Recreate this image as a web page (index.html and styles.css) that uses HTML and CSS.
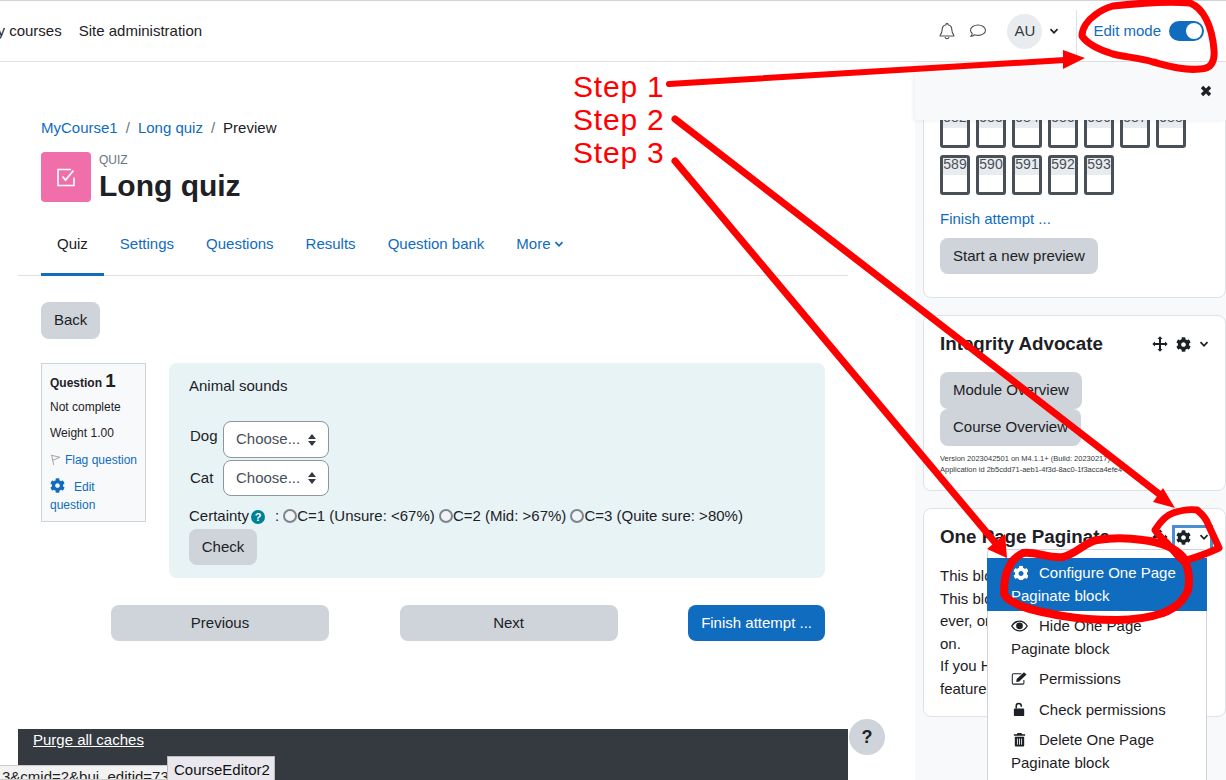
FILE: index.html
```html
<!DOCTYPE html>
<html lang="en">
<head>
  <meta charset="UTF-8">
  <title>Long quiz: Preview</title>
  <link rel="stylesheet" href="styles.css">
</head>
<body>
  <svg class="defs" width="0" height="0">
    <symbol id="cog" viewBox="0 0 512 512"><path d="M487.4 315.7l-42.6-24.6c4.3-23.2 4.3-47 0-70.2l42.6-24.6c4.9-2.8 7.1-8.6 5.5-14-11.1-35.6-30-67.8-54.7-94.6-3.8-4.1-10-5.1-14.8-2.3L380.8 110c-17.9-15.4-38.5-27.3-60.8-35.1V25.8c0-5.6-3.9-10.5-9.4-11.7-36.7-8.2-74.3-7.8-109.2 0-5.5 1.2-9.4 6.1-9.4 11.7V75c-22.2 7.9-42.8 19.8-60.8 35.1L88.7 85.5c-4.9-2.8-11-1.9-14.8 2.3-24.7 26.7-43.6 58.9-54.7 94.6-1.7 5.4.6 11.2 5.5 14L67.3 221c-4.3 23.2-4.3 47 0 70.2l-42.6 24.6c-4.9 2.8-7.1 8.6-5.5 14 11.1 35.6 30 67.8 54.7 94.6 3.8 4.1 10 5.1 14.8 2.3l42.6-24.6c17.9 15.4 38.5 27.3 60.8 35.1v49.2c0 5.6 3.9 10.5 9.4 11.7 36.7 8.2 74.3 7.8 109.2 0 5.5-1.2 9.4-6.1 9.4-11.7v-49.2c22.2-7.9 42.8-19.8 60.8-35.1l42.6 24.6c4.9 2.8 11 1.9 14.8-2.3 24.7-26.7 43.6-58.9 54.7-94.6 1.5-5.5-.7-11.3-5.6-14.1zM256 336c-44.1 0-80-35.9-80-80s35.9-80 80-80 80 35.9 80 80-35.9 80-80 80z" fill="currentColor"/></symbol>
    <symbol id="chev" viewBox="0 0 10 10"><path d="M1.5 3.2 5 6.8l3.5-3.6" fill="none" stroke="currentColor" stroke-width="1.7"/></symbol>
    <symbol id="move" viewBox="0 0 16 16"><path d="M8 .3 10.6 3H9v4h4V5.4L15.7 8 13 10.6V9H9v4h1.6L8 15.7 5.4 13H7V9H3v1.6L.3 8 3 5.4V7h4V3H5.4z" fill="currentColor"/></symbol>
  </svg>

  <nav class="topbar">
    <a class="nav-link my-courses">My courses</a>
    <a class="nav-link">Site administration</a>
    <div class="topbar-right">
      <svg class="nav-icon" viewBox="0 0 16 18" width="16" height="18"><path d="M8 1.2c.6 0 1 .4 1 1v.6c2.400.5 3.800 2.400 3.800 4.800 0 3.300 1 4.500 2 5.600v.8H1.200v-.8c1-1.100 2-2.300 2-5.600 0-2.400 1.400-4.300 3.800-4.800v-.6c0-.6.400-1 1-1zM6 15.200c.2 1 1 1.600 2 1.600s1.800-.6 2-1.600" fill="none" stroke="#495057" stroke-width="1.100"/></svg>
      <svg class="nav-icon comment" viewBox="0 0 18 16" width="18" height="16"><path d="M9 2C4.900 2 1.500 4.300 1.500 7.200c0 1.300.7 2.400 1.800 3.300-.2 1-.8 2-1.500 2.800 1.500-.1 2.800-.7 3.800-1.500 1.100.4 2.200.6 3.400.6 4.100 0 7.500-2.300 7.500-5.200S13.100 2 9 2z" fill="none" stroke="#495057" stroke-width="1.100"/></svg>
      <span class="avatar">AU</span>
      <svg class="nav-chev" width="10" height="10"><use href="#chev"/></svg>
      <div class="edit-switch">
        <span class="edit-label">Edit mode</span>
        <span class="toggle"><span class="knob"></span></span>
      </div>
    </div>
  </nav>

  <div class="page">
    <main class="main">
      <div class="content">
        <div class="breadcrumb">
          <a>MyCourse1</a><span class="sep">/</span><a>Long quiz</a><span class="sep">/</span><span>Preview</span>
        </div>
        <header class="page-head">
          <span class="quiz-icon">
            <svg viewBox="0 0 24 24" width="24" height="24"><path d="M20 12.500V20.500H4V4.500H17" fill="none" stroke="#fff" stroke-width="1.600"/><path d="M8.500 11.500 11.500 15 19.500 5.500" fill="none" stroke="#fff" stroke-width="1.800"/></svg>
          </span>
          <div>
            <div class="mod-type">QUIZ</div>
            <h1>Long quiz</h1>
          </div>
        </header>
        <ul class="tabs">
          <li class="active">Quiz</li>
          <li>Settings</li>
          <li>Questions</li>
          <li>Results</li>
          <li>Question bank</li>
          <li>More <svg class="tab-chev" width="10" height="10"><use href="#chev"/></svg></li>
        </ul>

        <button class="btn back">Back</button>

        <section class="question">
          <div class="q-info">
            <h3>Question <span class="qno">1</span></h3>
            <div class="q-state">Not complete</div>
            <div class="q-grade">Weight 1.00</div>
            <div class="q-flag">
              <svg viewBox="0 0 14 16" width="12" height="14"><path d="M2 1.500 4.800 14.500M2 2 12.500 4.500 6 7.500 3.200 8" fill="none" stroke="#868e96" stroke-width="1"/></svg>
              <a>Flag question</a>
            </div>
            <div class="q-edit">
              <svg width="15" height="15"><use href="#cog"/></svg><a class="edit-word">Edit</a><br><a>question</a>
            </div>
          </div>

          <div class="q-body">
            <p class="q-text">Animal sounds</p>
            <div class="match-row">
              <span class="match-label">Dog</span>
              <span class="fake-select tall">Choose...<span class="carets"></span></span>
            </div>
            <div class="match-row">
              <span class="match-label">Cat</span>
              <span class="fake-select">Choose...<span class="carets"></span></span>
            </div>
            <div class="certainty">
              Certainty<span class="help">?</span><span class="colon">:</span><input type="radio" name="c">C=1 (Unsure: &lt;67%) <input type="radio" name="c">C=2 (Mid: &gt;67%) <input type="radio" name="c">C=3 (Quite sure: &gt;80%)
            </div>
            <button class="btn check">Check</button>
          </div>
        </section>

        <div class="quiz-nav">
          <button class="btn wide">Previous</button>
          <button class="btn wide">Next</button>
          <button class="btn primary">Finish attempt ...</button>
        </div>

        <footer class="footer">
          <a class="purge">Purge all caches</a>
          <a class="footer-more">Switch role</a>
        </footer>
      </div>
      <button class="help-float">?</button>
    </main>

    <aside class="drawer">
      <div class="card nav-card">
        <div class="qn-row">
          <span class="qn"><i>582</i></span><span class="qn"><i>583</i></span><span class="qn"><i>584</i></span><span class="qn"><i>585</i></span><span class="qn"><i>586</i></span><span class="qn"><i>587</i></span><span class="qn"><i>588</i></span>
        </div>
        <div class="qn-row">
          <span class="qn"><i>589</i></span><span class="qn"><i>590</i></span><span class="qn"><i>591</i></span><span class="qn"><i>592</i></span><span class="qn"><i>593</i></span>
        </div>
        <a class="finish-link">Finish attempt ...</a>
        <button class="btn">Start a new preview</button>
      </div>

      <div class="card ia-card">
        <div class="card-head">
          <h5>Integrity Advocate</h5>
          <svg class="ic-move" width="16" height="16"><use href="#move"/></svg>
          <svg class="ic-cog" width="15" height="15"><use href="#cog"/></svg>
          <svg class="ic-chev" width="10" height="10"><use href="#chev"/></svg>
        </div>
        <div class="stack">
          <button class="btn">Module Overview</button>
          <button class="btn">Course Overview</button>
        </div>
        <div class="tiny">Version 2023042501 on M4.1.1+ (Build: 20230217)<br>Application id 2b5cdd71-aeb1-4f3d-8ac0-1f3acca4efe4</div>
      </div>

      <div class="card opp-card">
        <div class="card-head">
          <h5>One Page Paginate</h5>
          <svg class="ic-move" width="16" height="16"><use href="#move"/></svg>
          <span class="menu-focus">
            <svg class="ic-cog" width="15" height="15"><use href="#cog"/></svg>
            <svg class="ic-chev" width="10" height="10"><use href="#chev"/></svg>
          </span>
        </div>
        <p class="opp-text">This block lets you<br>This block works<br>ever, only<br>on.<br>If you Have<br>features</p>
      </div>

      <div class="drawer-head">
        <svg viewBox="0 0 12 12" width="12" height="12"><path d="M2 2 10 10M10 2 2 10" stroke="#1d2125" stroke-width="3.400"/></svg>
      </div>

      <ul class="menu">
        <li class="on"><svg class="mi" width="16" height="16" viewBox="-60 -60 632 632"><use href="#cog"/></svg>Configure One Page Paginate block</li>
        <li><svg class="mi" viewBox="0 0 18 14" width="17" height="14"><path d="M.8 7C3 3.500 5.800 1.800 9 1.800S15 3.500 17.200 7C15 10.500 12.200 12.200 9 12.200S3 10.500 .8 7z" fill="none" stroke="#1d2125" stroke-width="1.400"/><circle cx="9" cy="6.800" r="3.600" fill="#1d2125"/></svg>Hide One Page Paginate block</li>
        <li><svg class="mi" viewBox="0 0 18 16" width="17" height="15"><path d="M11 3H2.500A1.200 1.200 0 0 0 1.300 4.200v8.600A1.200 1.200 0 0 0 2.500 14h10a1.200 1.200 0 0 0 1.200-1.200V9.500" fill="none" stroke="#1d2125" stroke-width="1.100"/><path d="M6 8.500 13.800 1.200l2.700 2.400-7.800 7.500-3.200.7z" fill="#1d2125"/></svg>Permissions</li>
        <li><svg class="mi" viewBox="0 0 14 16" width="13" height="15"><path d="M3.500 7V4.200a2.700 2.700 0 0 1 5.400 0V5" fill="none" stroke="#1d2125" stroke-width="1.600"/><rect x="1" y="7" width="11" height="8" rx="1" fill="#1d2125"/></svg>Check permissions</li>
        <li><svg class="mi" viewBox="0 0 14 16" width="13" height="15"><path d="M5 1h4l1 1.500h3V4H1V2.500h3zM2 5h10v9.500a1 1 0 0 1-1 1H3a1 1 0 0 1-1-1z" fill="#1d2125"/><path d="M4.800 7v6.500M7 7v6.500M9.200 7v6.500" stroke="#fff" stroke-width=".9"/></svg>Delete One Page Paginate block</li>
      </ul>
    </aside>
  </div>

  <!-- annotations drawn on top of the screenshot -->
  <svg class="marks" width="1226" height="780" viewBox="0 0 1226 780">
    <g fill="none" stroke="#f00" stroke-linecap="round" stroke-linejoin="round">
      <path d="M669 84 1065 60" stroke-width="6"/>
      <path d="M675 119 1163 497" stroke-width="7"/>
      <path d="M675 161 998 546" stroke-width="7"/>
      <path d="M1113 6C1140 3 1170 1 1190 3 1203 8 1212 25 1214 50 1215 62 1211 69 1200 69 1183 71 1165 65 1153 62 1140 58 1125 57 1113 54 1100 50 1088 45 1082 36 1082 28 1088 20 1095 15 1100 11 1106 8 1113 6z" stroke-width="7"/>
      <path d="M1155 530C1160 522 1167 515 1173 513 1182 510 1190 509 1197 510 1202 514 1206 518 1208 524 1212 533 1216 541 1219 548 1208 553 1195 558 1183 561 1177 556 1172 549 1167 543 1163 539 1158 535 1155 530z" stroke-width="7"/>
      <path d="M1023 553C1035 551 1050 559 1063 557 1078 553 1085 542 1097 540 1115 537 1130 538 1143 540 1160 542 1175 548 1183 557 1189 568 1190 580 1188 590 1183 602 1175 608 1163 613 1148 618 1132 620 1117 620 1098 620 1080 619 1063 616 1045 613 1030 610 1019 605 1010 601 1005 598 1004 593 1004 583 1005 574 1009 567 1012 560 1017 556 1023 553z" stroke-width="8"/>
    </g>
    <path d="M1085 58 1063 50 1063 69z" fill="#f00"/>
    <path d="M1175 508 1163 488 1153 502z" fill="#f00"/>
    <path d="M1007 558 1005 534 987 549z" fill="#f00"/>
  </svg>
  <div class="steps">
    <div>Step 1</div>
    <div>Step 2</div>
    <div>Step 3</div>
  </div>

  <div class="url-tip">3&amp;cmid=2&amp;bui_editid=73</div>
  <div class="name-tip">CourseEditor2</div>
</body>
</html>
```

FILE: styles.css
```css
html, body {
  margin: 0;
  padding: 0;
}
body {
  position: relative;
  width: 1226px;
  height: 780px;
  overflow: hidden;
  font-family: "Liberation Sans", Arial, sans-serif;
  font-size: 15px;
  line-height: 22.5px;
  color: #1d2125;
  background: #fff;
}
a {
  color: #0f6cbf;
}
.defs {
  position: absolute;
}

/* top bar */
.topbar {
  display: flex;
  align-items: center;
  box-sizing: border-box;
  height: 62px;
  border-top: 1px solid #ced4da;
  border-bottom: 1px solid #dee2e6;
}
.nav-link {
  color: #1d2125;
}
.my-courses {
  margin-left: -15px;
  margin-right: 17px;
}
.topbar-right {
  display: flex;
  align-items: center;
  margin-left: auto;
  height: 100%;
}
.nav-icon {
  margin-right: 14px;
}
.nav-icon.comment {
  margin-right: 20px;
}
.avatar {
  display: flex;
  align-items: center;
  justify-content: center;
  width: 35px;
  height: 35px;
  border-radius: 50%;
  background: #e9ecef;
  color: #343a40;
}
.nav-chev {
  margin-left: 7px;
}
.edit-switch {
  display: flex;
  align-items: center;
  height: 52px;
  margin-top: 9px;
  margin-left: 17px;
  padding: 0 22px 9px 16px;
  border-left: 1px solid #dee2e6;
  box-sizing: border-box;
  color: #0f6cbf;
}
.edit-label {
  margin-right: 8px;
}
.toggle {
  display: flex;
  justify-content: flex-end;
  align-items: center;
  box-sizing: border-box;
  width: 35px;
  height: 20px;
  padding: 2px;
  border-radius: 10px;
  background: #0f6cbf;
}
.knob {
  width: 16px;
  height: 16px;
  border-radius: 50%;
  background: #fff;
}

/* main column */
.page {
  display: flex;
  height: 718px;
}
.main {
  position: relative;
  width: 915px;
  flex: none;
}
.content {
  box-sizing: border-box;
  width: 830px;
  margin-left: 18px;
  padding-top: 55px;
}
.breadcrumb {
  margin-left: 23px;
  display: flex;
}
.sep {
  margin: 0 8px;
  color: #6a737b;
}
.page-head {
  display: flex;
  margin: 12px 0 21px 23px;
  height: 50px;
}
.quiz-icon {
  display: flex;
  align-items: center;
  justify-content: center;
  width: 50px;
  height: 50px;
  margin-right: 8px;
  border-radius: 4px;
  background: #f06eaa;
}
.mod-type {
  font-size: 12px;
  line-height: 16px;
  color: #6a737b;
}
h1 {
  margin: 0;
  font-size: 30px;
  line-height: 36px;
  font-weight: bold;
}
.tabs {
  display: flex;
  margin: 0 0 26px;
  padding: 0 0 0 23px;
  list-style: none;
  border-bottom: 1px solid #dee2e6;
}
.tabs li {
  padding: 10px 16px 18px;
  color: #0f6cbf;
  border-bottom: 3px solid transparent;
  margin-bottom: -1px;
}
.tabs li.active {
  color: #1d2125;
  border-bottom-color: #0f6cbf;
}
.tab-chev {
  margin-left: -1px;
}
.btn {
  padding: 7px 13px;
  border: 0;
  border-radius: 8px;
  background: #ced4da;
  color: #1d2125;
  font-family: inherit;
  font-size: 15px;
  line-height: 22.5px;
}
.btn.primary {
  background: #0f6cbf;
  color: #fff;
}
.back {
  display: block;
  margin-left: 23px;
}

/* question */
.question {
  display: flex;
  align-items: flex-start;
  gap: 23px;
  margin: 24px 23px 27px;
}
.q-info {
  box-sizing: border-box;
  flex: none;
  width: 105px;
  height: 159px;
  padding: 8px;
  background: #f8f9fa;
  border: 1px solid #ced4da;
  font-size: 12px;
  line-height: 18px;
}
.q-info h3 {
  margin: 0 0 6px;
  font-size: 12px;
  line-height: 18px;
  font-weight: bold;
}
.qno {
  font-size: 18.750px;
}
.q-state {
  margin-bottom: 8px;
}
.q-grade {
  margin-bottom: 9px;
}
.q-flag {
  display: flex;
  align-items: center;
  gap: 4px;
  margin-bottom: 9px;
  white-space: nowrap;
}
.q-edit svg {
  color: #0f6cbf;
  vertical-align: -2px;
}
.edit-word {
  margin-left: 9px;
}
.q-body {
  box-sizing: border-box;
  flex: 1;
  height: 215px;
  padding: 12px 20px;
  border-radius: 8px;
  background: #e7f3f5;
}
.q-text {
  margin: 0 0 24px;
}
.match-row {
  display: flex;
  align-items: center;
  margin-bottom: 2px;
}
.match-label {
  width: 33px;
  margin-left: 1px;
  margin-top: -7px;
}
.match-row + .match-row .match-label {
  margin-top: 0;
}
.fake-select {
  display: flex;
  align-items: center;
  box-sizing: border-box;
  width: 106px;
  height: 36px;
  padding-left: 12px;
  background: #fff;
  border: 1px solid #8f959e;
  border-radius: 8px;
  color: #495057;
}
.fake-select.tall {
  height: 37px;
}
.carets {
  position: relative;
  width: 8px;
  height: 12px;
  margin-left: 8px;
}
.carets::before,
.carets::after {
  content: "";
  position: absolute;
  left: 0;
  border-left: 4px solid transparent;
  border-right: 4px solid transparent;
}
.carets::before {
  top: 0;
  border-bottom: 5px solid #343a40;
}
.carets::after {
  bottom: 0;
  border-top: 5px solid #343a40;
}
.certainty {
  margin-top: 9px;
  white-space: nowrap;
}
.certainty input {
  appearance: none;
  box-sizing: border-box;
  width: 14px;
  height: 14px;
  margin: 0;
  border: 2px solid #7d858d;
  border-radius: 50%;
  background: #f0f4f6;
  vertical-align: -2px;
}
.help {
  display: inline-block;
  width: 14px;
  height: 14px;
  margin: 0 10px 0 2px;
  border-radius: 50%;
  background: #008196;
  color: #fff;
  font-size: 11px;
  font-weight: bold;
  line-height: 14px;
  text-align: center;
  vertical-align: 0;
}
.colon {
  margin-right: 4px;
}
.check {
  display: block;
  width: 68px;
  padding-left: 0;
  padding-right: 0;
  margin-top: 1px;
}
.quiz-nav {
  display: flex;
  justify-content: space-between;
  margin: 0 23px 0 93px;
}
.quiz-nav .btn {
  height: 36px;
  padding-top: 1px;
  padding-bottom: 0;
}
.wide {
  width: 218px;
}
.footer {
  margin-top: 88px;
  height: 60px;
  padding: 0 15px;
  background: #343a40;
  color: #fff;
}
.purge {
  display: block;
  color: #fff;
  text-decoration: underline;
}
.footer-more {
  display: block;
  margin-top: 9px;
  margin-left: 34px;
  color: #fff;
}
.help-float {
  position: absolute;
  left: 849px;
  top: 657px;
  width: 36px;
  height: 36px;
  border: 0;
  border-radius: 50%;
  background: #ced4da;
  color: #1d2125;
  font-family: inherit;
  font-size: 18px;
  font-weight: bold;
}

/* right drawer */
.drawer {
  position: relative;
  flex: 1;
  box-sizing: border-box;
  padding: 0 0 0 8px;
  background: #f8f9fa;
}
.card {
  box-sizing: border-box;
  margin-bottom: 17px;
  padding: 0 16px;
  background: #fff;
  border: 1px solid #dee2e6;
  border-radius: 8px;
}
.nav-card {
  height: 236px;
  padding-top: 45px;
}
.qn-row {
  display: flex;
  gap: 6px;
  margin-bottom: 7px;
}
.qn {
  box-sizing: border-box;
  width: 30px;
  height: 40px;
  border: 3px solid #495057;
  border-radius: 3px;
  background: #fff;
}
.qn i {
  display: block;
  height: 17px;
  background: #e9ecef;
  color: #495057;
  font-size: 14px;
  font-style: normal;
  line-height: 13px;
  text-align: center;
  white-space: nowrap;
}
.finish-link {
  display: block;
  margin: 13px 0 7px;
}
.nav-card .btn {
  display: block;
}
.card-head {
  display: flex;
  align-items: center;
  height: 24px;
  position: relative;
}
.card-head h5 {
  margin: 0;
  font-size: 18.750px;
  line-height: 24px;
  font-weight: bold;
  flex: 1;
  white-space: nowrap;
}
.ic-move {
  margin-right: 8px;
}
.ic-chev {
  margin-left: 8px;
}
.ia-card {
  height: 176px;
  padding-top: 16px;
}
.stack {
  margin-top: 16px;
}
.stack .btn {
  display: block;
  padding-top: 7px;
  padding-bottom: 7px;
  margin-bottom: 0.500px;
}
.tiny {
  margin-top: 7px;
  font-size: 7.500px;
  line-height: 11px;
  white-space: nowrap;
  color: #343a40;
}
.opp-card {
  height: 209px;
  padding-top: 16px;
}
.menu-focus {
  display: flex;
  align-items: center;
  margin-bottom: -4px;
  padding: 1px 0 5px;
  outline: 3px solid #4a90d0;
  outline-offset: 1px;
}
.opp-text {
  margin: 16px 0 0;
  white-space: nowrap;
}
.drawer-head {
  position: absolute;
  left: 0;
  top: 0;
  right: 0;
  height: 58px;
  display: flex;
  align-items: center;
  justify-content: flex-end;
  padding-right: 14px;
  background: #f8f9fa;
  box-shadow: -2px 1px 4px rgba(0, 0, 0, 0.060);
}
.menu {
  position: absolute;
  left: 72px;
  top: 487px;
  width: 220px;
  box-sizing: border-box;
  margin: 0;
  padding: 8px 0;
  list-style: none;
  background: #fff;
  border: 1px solid #ced4da;
  border-radius: 4px;
}
.menu li {
  margin: 0 -1px;
  padding: 4px 24px;
}
.menu li.on {
  background: #0f6cbf;
  color: #fff;
}
.mi {
  width: 17px;
  margin-right: 11px;
  vertical-align: -2px;
  color: inherit;
}

/* annotations */
.marks {
  position: absolute;
  left: 0;
  top: 0;
}
.steps {
  position: absolute;
  left: 573px;
  top: 70px;
  color: #f00;
  font-size: 30px;
  line-height: 33px;
  letter-spacing: 0.800px;
}
.url-tip {
  position: absolute;
  left: -4px;
  top: 765px;
  width: 174px;
  height: 15px;
  padding-left: 5px;
  box-sizing: border-box;
  background: #f2f2f2;
  border: 1px solid #ccc;
  border-radius: 0 3px 0 0;
  color: #222;
  font-size: 15px;
  line-height: 22px;
  white-space: nowrap;
  overflow: hidden;
}
.name-tip {
  position: absolute;
  left: 167px;
  top: 756px;
  width: 108px;
  height: 26px;
  box-sizing: border-box;
  padding-left: 6px;
  background: #e8e8ee;
  border: 1px solid #bbb;
  color: #111;
  font-size: 15px;
  line-height: 26px;
  white-space: nowrap;
}
```
